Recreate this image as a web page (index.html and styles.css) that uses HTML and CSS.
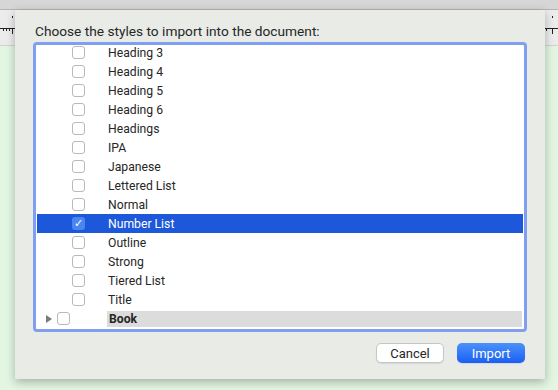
FILE: index.html
```html
<html>

<head>
    <link rel="stylesheet" href="styles.css">
</head>
<body>
    <div class="window">
        <div class="titlebar"></div>
        <div class="ruler">
            <svg class="ruler-marks" width="558" height="35" viewBox="0 0 558 35">
                <g stroke="#222" stroke-width="1" fill="none">
                    <line x1="0" y1="18.5" x2="15" y2="18.5" />
                    <line x1="3.5" y1="18" x2="3.5" y2="21" />
                    <line x1="6.5" y1="18" x2="6.5" y2="21" />
                    <line x1="9.5" y1="18" x2="9.5" y2="21" />
                    <line x1="12.5" y1="18" x2="12.5" y2="24" />
                    <line x1="545" y1="18.5" x2="558" y2="18.5" />
                    <line x1="546.5" y1="18" x2="546.5" y2="21" />
                    <line x1="552.5" y1="18" x2="552.5" y2="24" />
                </g>
                <rect x="12" y="6" width="1" height="2" fill="#222" />
                <rect x="552" y="6" width="1" height="2" fill="#222" />
            </svg>
        </div>
        <div class="page"></div>

        <div class="sheet">
            <p class="prompt">Choose the styles to import into the document:</p>
            <div class="list">
                <div class="rows">
                    <div class="row"><span class="check"></span><span class="label">Heading 3</span></div>
                    <div class="row"><span class="check"></span><span class="label">Heading 4</span></div>
                    <div class="row"><span class="check"></span><span class="label">Heading 5</span></div>
                    <div class="row"><span class="check"></span><span class="label">Heading 6</span></div>
                    <div class="row"><span class="check"></span><span class="label">Headings</span></div>
                    <div class="row"><span class="check"></span><span class="label">IPA</span></div>
                    <div class="row"><span class="check"></span><span class="label">Japanese</span></div>
                    <div class="row"><span class="check"></span><span class="label">Lettered List</span></div>
                    <div class="row"><span class="check"></span><span class="label">Normal</span></div>
                    <div class="row selected"><span class="check on">&#10003;</span><span class="label">Number List</span></div>
                    <div class="row"><span class="check"></span><span class="label">Outline</span></div>
                    <div class="row"><span class="check"></span><span class="label">Strong</span></div>
                    <div class="row"><span class="check"></span><span class="label">Tiered List</span></div>
                    <div class="row"><span class="check"></span><span class="label">Title</span></div>
                    <div class="row group"><span class="disclosure"></span><span class="check"></span><span class="label">Book</span></div>
                </div>
            </div>
            <div class="actions">
                <button class="btn">Cancel</button>
                <button class="btn primary">Import</button>
            </div>
        </div>
    </div>
</body>

</html>
```

FILE: styles.css
```css
body {
    margin: 0;
    font-family: Roboto, "Liberation Sans", sans-serif;
    color: #262626;
}

.window {
    position: relative;
    width: 558px;
    height: 390px;
    overflow: hidden;
    display: flex;
    flex-direction: column;
}

.titlebar {
    height: 9px;
    background-color: #d6d6d6;
    border-bottom: 1px solid #b4b4b4;
}

.ruler {
    height: 35px;
    background-color: #ececec;
    border-bottom: 1px solid #d2d2d2;
}

.ruler-marks {
    display: block;
}

.page {
    flex: 1;
    background-color: #e2f6e2;
}

/* the sheet dialog lies over the document */
.sheet {
    position: absolute;
    left: 15px;
    top: 10px;
    width: 530px;
    height: 369px;
    background-color: #e9ebe7;
    box-shadow: 0 3px 9px rgba(0, 0, 0, 0.28);
    display: flex;
    flex-direction: column;
}

.prompt {
    margin: 0;
    padding: 13px 20px 0 20px;
    font-size: 13.7px;
    line-height: 16px;
}

.list {
    margin: 3px 0 0 18px;
    width: 494px;
    height: 290px;
    box-sizing: border-box;
    border: 3px solid #809ff0;
    border-radius: 4px;
    background-color: white;
    padding: 0 1px;
    overflow: hidden;
}

.rows {
    margin-top: -2px;
}

.row {
    display: flex;
    align-items: center;
    height: 19px;
    font-size: 12.2px;
}

.check {
    box-sizing: border-box;
    width: 13px;
    height: 13px;
    margin-left: 35px;
    border: 1px solid #b9b9b9;
    border-radius: 3px;
    background-color: white;
    flex-shrink: 0;
}

.label {
    margin-left: 23px;
}

.selected {
    background-color: #1c58d9;
    color: white;
}

.check.on {
    border: none;
    background-color: #4a86f0;
    color: white;
    font-size: 11px;
    line-height: 13px;
    text-align: center;
}

.disclosure {
    margin-left: 9px;
    width: 0;
    height: 0;
    border-left: 6px solid #7a7a7a;
    border-top: 4px solid transparent;
    border-bottom: 4px solid transparent;
}

.group .check {
    margin-left: 5px;
}

.group .label {
    flex: 1;
    margin-left: 37px;
    margin-right: 1px;
    padding-left: 2px;
    height: 16px;
    line-height: 16px;
    background-color: #dcdcdc;
    font-weight: bold;
}

.actions {
    display: flex;
    justify-content: flex-end;
    gap: 13px;
    padding: 11px 20px 0 0;
}

.btn {
    width: 68px;
    height: 20px;
    padding: 0;
    font-family: Roboto, "Liberation Sans", sans-serif;
    font-size: 13px;
    color: #262626;
    background-color: white;
    border: 1px solid #c6c6c6;
    border-radius: 5px;
    box-shadow: 0 1px 1px rgba(0, 0, 0, 0.08);
}

.btn.primary {
    color: white;
    border: none;
    background: linear-gradient(#4b91fb, #1b5ff4);
}
```
